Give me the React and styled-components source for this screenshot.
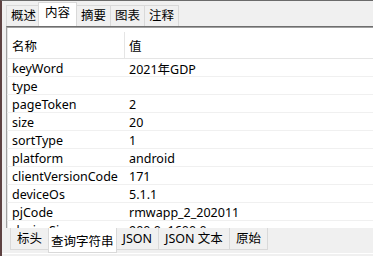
import styled, { createGlobalStyle } from 'styled-components';

const GlobalStyle = createGlobalStyle`
  html, body {
    margin: 0;
    padding: 0;
    background: #f0f0f0;
  }
  * {
    box-sizing: border-box;
  }
`;

const rows = [
    ['keyWord', '2021年GDP'],
    ['type', ''],
    ['pageToken', '2'],
    ['size', '20'],
    ['sortType', '1'],
    ['platform', 'android'],
    ['clientVersionCode', '171'],
    ['deviceOs', '5.1.1'],
    ['pjCode', 'rmwapp_2_202011'],
    ['deviceSize', '900.0x1600.0'],
];

const topTabs = ['概述', '内容', '摘要', '图表', '注释'];
const bottomTabs = ['标头', '查询字符串', 'JSON', 'JSON 文本', '原始'];

const App = () => {
    return(
        <>
            <GlobalStyle />
            <Window>
                <TabBar>
                    {topTabs.map((t) => (
                        <TopTab key={t} active={t === '内容'}>{t}</TopTab>
                    ))}
                </TabBar>
                <Panel>
                    <HeaderRow>
                        <NameCell>名称</NameCell>
                        <ValueCell divider>值</ValueCell>
                    </HeaderRow>
                    {rows.map(([k, v]) => (
                        <Row key={k}>
                            <NameCell>{k}</NameCell>
                            <ValueCell>{v}</ValueCell>
                        </Row>
                    ))}
                </Panel>
                <BottomBar>
                    {bottomTabs.map((t) => (
                        <BottomTab key={t} active={t === '查询字符串'}>{t}</BottomTab>
                    ))}
                </BottomBar>
            </Window>
        </>
    )
}

const Window = styled.div`
  width: 373px;
  height: 256px;
  overflow: hidden;
  background: #f0f0f0;
  border-left: 2px solid #5e4242;
  border-top: 1px solid #6b6b6b;
  font-family: "Noto Sans", "Noto Sans CJK SC", sans-serif;
  font-size: 12.5px;
  color: #000;
  display: flex;
  flex-direction: column;
`;

const TabBar = styled.div`
  display: flex;
  align-items: flex-end;
  height: 25px;
  padding-left: 4px;
`;

const TopTab = styled.div`
  height: ${(p) => (p.active ? '24px' : '21px')};
  padding: 0 ${(p) => (p.active ? '6px' : '4px')} ${(p) => (p.active ? '2px' : '0')};
  margin: 0 ${(p) => (p.active ? '-2px' : '0')};
  position: relative;
  z-index: ${(p) => (p.active ? 1 : 0)};
  display: flex;
  align-items: center;
  background: ${(p) => (p.active ? '#ffffff' : '#f0f0f0')};
  border: 1px solid #d9d9d9;
  border-bottom: none;
  margin-right: -1px;
  line-height: 1;
`;

const Panel = styled.div`
  margin-left: 4px;
  height: 202px;
  background: #fff;
  border-top: 1px solid #6e6e6e;
  border-left: 1px solid #a0a0a0;
  box-shadow: inset 0 1px 0 #a0a0a0, inset 1px 0 0 #e3e3e3;
  padding-top: 1px;
  overflow: hidden;
`;

const HeaderRow = styled.div`
  display: flex;
  height: 31px;
  align-items: center;
  border-bottom: 1px solid #e5e5e5;
  padding-top: 4px;
`;

const Row = styled.div`
  display: flex;
  height: 18px;
  align-items: center;
  padding-top: 1px;
  border-bottom: 1px solid #f0f0f0;
  white-space: nowrap;
`;

const NameCell = styled.div`
  width: 117px;
  flex: none;
  padding-left: 5px;
`;

const ValueCell = styled.div`
  flex: 1;
  padding-left: 4px;
  align-self: stretch;
  display: flex;
  align-items: center;
  border-left: 1px solid ${(p) => (p.divider ? '#e5e5e5' : 'transparent')};
`;

const BottomBar = styled.div`
  display: flex;
  align-items: flex-start;
  height: 26px;
  padding-left: 8px;
  border-bottom: 1px solid #fff;
`;

const BottomTab = styled.div`
  height: ${(p) => (p.active ? '25px' : '22px')};
  padding: ${(p) => (p.active ? '4px 2px 0' : '1px 6px 0')};
  position: relative;
  z-index: ${(p) => (p.active ? 1 : 0)};
  display: flex;
  align-items: center;
  background: ${(p) => (p.active ? '#ffffff' : '#f0f0f0')};
  border: 1px solid #d9d9d9;
  border-top: none;
  margin-right: -1px;
  line-height: 1;
`;

export default App;
